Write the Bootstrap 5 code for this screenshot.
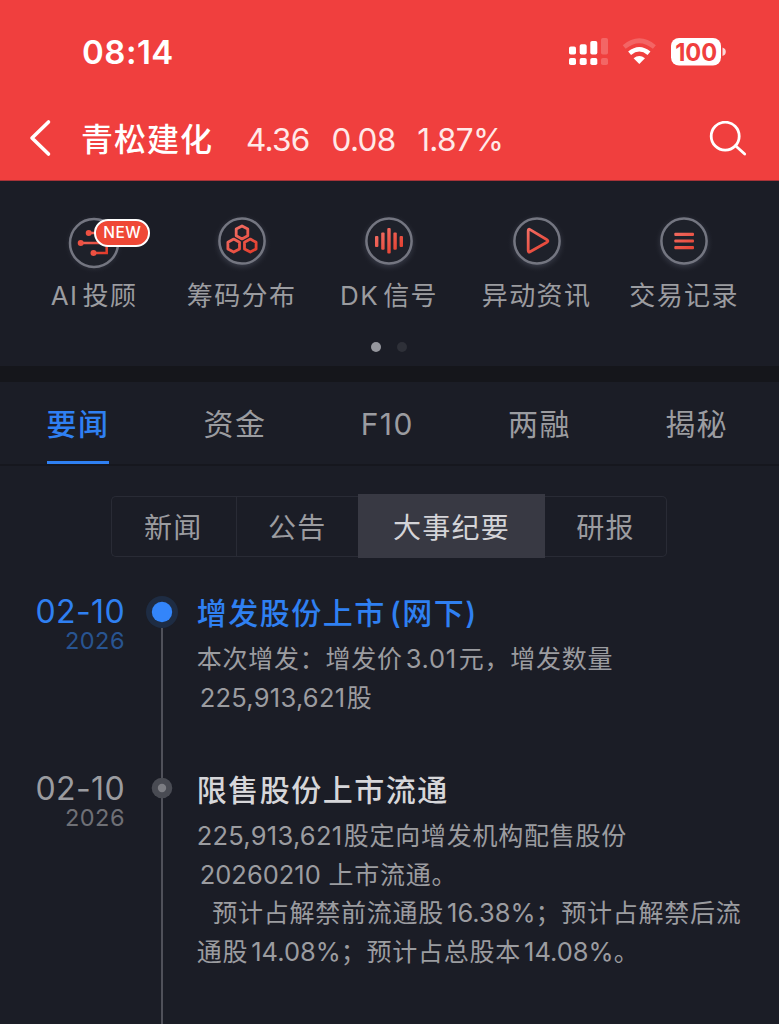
<!DOCTYPE html>
<html lang="zh-CN">
<head>
<meta charset="utf-8">
<meta name="viewport" content="width=device-width, initial-scale=1">
<title>青松建化</title>
<link href="https://cdn.jsdelivr.net/npm/bootstrap@5.3.0/dist/css/bootstrap.min.css" rel="stylesheet">
<style>
  body { background:#1b1d26; color:#9b9ca0; font-family:Inter,"Noto Sans CJK SC",sans-serif; height:1024px; overflow:hidden; line-height:1; }
  .top-area { background:#f03f3e; height:181px; color:#fff; border-bottom:1px solid #a83338; }
  .status-row { height:104px; padding:0 53px 0 82px; }
  .clock { font-size:33px; font-weight:600; letter-spacing:.5px; }
  .title-row { height:70px; padding:0 32px 0 28px; }
  .stock-name { font-size:32px; font-weight:500; letter-spacing:1px; width:165px; margin-left:29px; padding-top:1px; }
  .quote { font-size:31.5px; color:#ffe9e8; gap:21.8px; letter-spacing:-.7px; padding-top:1px; }
  .tools { height:185px; padding:30px 21px 0 20.3px; }
  .tool { width:147.5px; }
  .tool-label { font-size:26px; letter-spacing:1.4px; margin-top:10px; line-height:26px; white-space:nowrap; }
  .new-tag { left:74px; top:8px; width:56px; height:28px; border:2px solid #fff; background:#ef4836; color:#fff; font-size:15.5px; font-weight:500; border-radius:14px; letter-spacing:.5px; }
  .dots { gap:16px; margin-top:33px; }
  .dots i { width:10px; height:10px; border-radius:50%; background:#2e3038; }
  .dots i.on { background:#96979e; }
  .band { height:16px; background:#15161b; }
  .tabs { height:84px; border-bottom:2px solid #16171e; padding-left:46.5px; padding-right:51px; font-size:30px; letter-spacing:1.4px; }
  .tab-item { padding-top:27px; height:82px; line-height:30px; border-bottom:3px solid transparent; }
  .tab-item.on { color:#2f80f2; font-weight:500; border-color:#2f80f2; }
  .segments { margin:28px 112px 0 111px; height:64px; font-size:28px; letter-spacing:1.3px; }
  .seg { height:61px; border:1.5px solid #292b35; border-right-width:0; line-height:28px; padding-top:3px; }
  .seg.first { width:124.5px; border-radius:5px 0 0 5px; padding-right:1px; }
  .seg.mid { width:122.5px; }
  .seg.last { width:122px; border-right-width:1.5px; border-left:0; border-radius:0 5px 5px 0; }
  .seg.on { width:187px; height:64px; border:0; background:#383943; color:#d4d4d8; }
  .timeline { margin-top:34px; height:432px; }
  .entry { height:177px; }
  .entry.tall { height:255px; }
  .when { width:125px; text-align:right; padding-top:2px; }
  .day { font-size:32px; line-height:36px; letter-spacing:.4px; }
  .year { font-size:23.5px; line-height:22px; letter-spacing:.5px; color:#6f7076; }
  .rail { width:71.7px; position:relative; }
  .rail::before { content:""; width:2.4px; position:absolute; top:0; bottom:0; left:35.8px; background:#50515a; }
  .entry.on .rail::before { top:36px; }
  .rail svg { position:absolute; left:19px; top:2px; }
  .headline { font-size:30px; font-weight:500; letter-spacing:1.5px; line-height:40px; padding-top:1px; height:41px; color:#d6d6d9; white-space:nowrap; }
  .detail { font-size:25px; letter-spacing:.75px; line-height:38.7px; margin-top:7px; white-space:nowrap; }
  .detail b { font-weight:400; letter-spacing:0; margin-left:3px; font-size:25.5px; }
  .detail .long-num { letter-spacing:.25px; margin-right:1.5px; }
  .detail .price { letter-spacing:.7px; margin-right:2px; }
  .on .day, .on .headline { color:#2f80f2; }
  .on .year { color:#285491; }
</style>
</head>
<body>
<header class="top-area">
  <div class="status-row d-flex align-items-center justify-content-between">
    <span class="clock">08:14</span>
    <div class="d-flex align-items-center">
      <svg width="158" height="30" viewBox="568 37 158 30">
        <g fill="#fff">
          <rect x="569" y="46.5" width="7" height="8" rx="1.8"/><rect x="579.7" y="44.3" width="7" height="10.2" rx="1.8"/><rect x="590.3" y="41" width="7" height="13.5" rx="1.8"/>
          <rect x="569" y="58" width="7" height="7" rx="1.8"/><rect x="579.7" y="58" width="7" height="7" rx="1.8"/><rect x="590.3" y="58" width="7" height="7" rx="1.8"/>
          <g opacity=".2"><rect x="601" y="38" width="7" height="16.5" rx="1.8"/><rect x="601" y="58" width="7" height="7" rx="1.8"/></g>
          <path d="M639.3 64 633.6 58.3Q639.3 53.8 645 58.3Z"/>
        </g>
        <path d="M629.6 53.2Q639.3 45.3 649 53.2" fill="none" stroke="#fff" stroke-width="4.6"/>
        <path d="M624.2 47Q639.3 34.5 654.4 47" fill="none" stroke="#fff" stroke-width="4.6" opacity=".2"/>
        <rect x="671" y="38" width="50" height="27.5" rx="8" fill="#fff"/>
        <path d="M722.5 47.5Q725.8 48.5 725.8 51.7T722.5 56Z" fill="#fff" opacity=".8"/>
        <text x="696.2" y="60.6" text-anchor="middle" font-family="Inter" font-size="24" font-weight="700" textLength="42" lengthAdjust="spacingAndGlyphs" fill="#f03f3e">100</text>
      </svg>
    </div>
  </div>
  <div class="title-row d-flex align-items-center">
    <svg width="24" height="40" viewBox="0 0 24 40"><path d="M20.5 3 4 19 20.5 35" fill="none" stroke="#fff" stroke-width="3.6" stroke-linecap="round" stroke-linejoin="round"/></svg>
    <span class="stock-name">青松建化</span>
    <div class="quote d-flex"><span>4.36</span><span>0.08</span><span>1.87%</span></div>
    <svg class="ms-auto" width="38" height="36" viewBox="709 120 38 36"><g fill="none" stroke="#fff" stroke-width="2.8" stroke-linecap="round"><circle cx="725.2" cy="135.2" r="14"/><path d="M735.5 144.7 744.7 153"/></g></svg>
  </div>
</header>

<svg width="0" height="0" class="position-absolute">
  <defs>
    <linearGradient id="warm" gradientUnits="userSpaceOnUse" x1="18" y1="16" x2="42" y2="44"><stop stop-color="#f4736a"/><stop offset="1" stop-color="#e23a29"/></linearGradient>
    <radialGradient id="halo"><stop offset=".72" stop-color="#343743"/><stop offset="1" stop-color="#1b1d26" stop-opacity="0"/></radialGradient>
  </defs>
</svg>
<section class="tools">
  <div class="d-flex">
    <div class="tool d-flex flex-column align-items-center position-relative">
      <svg width="60" height="62" viewBox="0 0 60 62"><circle cx="30" cy="33" r="30" fill="url(#halo)"/><circle cx="30" cy="32" r="24" fill="#1e212a" stroke="#747681" stroke-width="2.5"/>
        <g fill="none" stroke="url(#warm)" stroke-width="2.5"><path d="M24 22.1H40M17 32H39M29 42.1H42.7V34"/></g><g fill="#ee5142"><circle cx="24.7" cy="22" r="3"/><circle cx="16.7" cy="32" r="3"/><circle cx="29.5" cy="42" r="3"/></g></svg>
      <span class="new-tag position-absolute d-flex align-items-center justify-content-center">NEW</span>
      <span class="tool-label">AI<span class="ms-1">投顾</span></span>
    </div>
    <div class="tool d-flex flex-column align-items-center">
      <svg width="60" height="62" viewBox="0 0 60 62"><circle cx="30" cy="32" r="30" fill="url(#halo)"/><circle cx="30" cy="30" r="22.6" fill="#1e212a" stroke="#747681" stroke-width="2.5"/>
        <g fill="none" stroke="url(#warm)" stroke-width="2.8" stroke-linejoin="round"><path d="M30 14.9 35.8 18.1V24.7L30 27.9 24.2 24.7V18.1ZM21.7 28.1 27.5 31.3V37.9L21.7 41.1 15.9 37.9V31.3ZM38.3 28.1 44.1 31.3V37.9L38.3 41.1 32.5 37.9V31.3Z"/></g></svg>
      <span class="tool-label">筹码分布</span>
    </div>
    <div class="tool d-flex flex-column align-items-center">
      <svg width="60" height="62" viewBox="0 0 60 62"><circle cx="30" cy="32" r="30" fill="url(#halo)"/><circle cx="30" cy="30" r="22.6" fill="#1e212a" stroke="#747681" stroke-width="2.5"/>
        <g fill="url(#warm)"><rect x="16" y="24.9" width="3.4" height="11" rx="1"/><rect x="22.2" y="21.5" width="3.4" height="17.2" rx="1"/><rect x="28.3" y="17" width="3.4" height="25.4" rx="1"/><rect x="34.4" y="21.5" width="3.4" height="17.2" rx="1"/><rect x="40.6" y="24.9" width="3.4" height="11" rx="1"/></g></svg>
      <span class="tool-label">DK<span class="ms-1">信号</span></span>
    </div>
    <div class="tool d-flex flex-column align-items-center">
      <svg width="60" height="62" viewBox="0 0 60 62"><circle cx="30" cy="32" r="30" fill="url(#halo)"/><circle cx="30" cy="30" r="22.6" fill="#1e212a" stroke="#747681" stroke-width="2.5"/>
        <path d="M21.2 20V39.6Q21.2 41.8 23.1 40.7L40 31.2Q41.8 30 40 28.8L23.1 18.6Q21.2 17.5 21.2 20Z" fill="none" stroke="url(#warm)" stroke-width="2.8" stroke-linejoin="round"/></svg>
      <span class="tool-label">异动资讯</span>
    </div>
    <div class="tool d-flex flex-column align-items-center">
      <svg width="60" height="62" viewBox="0 0 60 62"><circle cx="30" cy="32" r="30" fill="url(#halo)"/><circle cx="30" cy="30" r="22.6" fill="#1e212a" stroke="#747681" stroke-width="2.5"/>
        <g fill="url(#warm)"><rect x="20.3" y="21.8" width="19.7" height="3.2" rx="1"/><rect x="20.3" y="28.4" width="19.7" height="3.2" rx="1"/><rect x="20.3" y="35" width="19.7" height="3.2" rx="1"/></g></svg>
      <span class="tool-label">交易记录</span>
    </div>
  </div>
  <div class="dots d-flex justify-content-center"><i class="on"></i><i></i></div>
</section>
<div class="band"></div>
<nav class="tabs d-flex justify-content-between">
  <span class="tab-item on">要闻</span><span class="tab-item">资金</span><span class="tab-item">F10</span><span class="tab-item">两融</span><span class="tab-item">揭秘</span>
</nav>
<div class="segments d-flex align-items-center">
  <span class="seg first d-flex align-items-center justify-content-center">新闻</span>
  <span class="seg mid d-flex align-items-center justify-content-center">公告</span>
  <span class="seg on d-flex align-items-center justify-content-center">大事纪要</span>
  <span class="seg last d-flex align-items-center justify-content-center">研报</span>
</div>
<main class="timeline">
  <article class="entry on d-flex">
    <div class="when"><div class="day">02-10</div><div class="year">2026</div></div>
    <div class="rail"><svg width="36" height="36" viewBox="0 0 36 36"><circle cx="18" cy="18" r="16" fill="#1e2c43"/><circle cx="18" cy="18" r="10.2" fill="#3385fa"/></svg></div>
    <div>
      <div class="headline">增发股份上市<span class="ms-1">(网下)</span></div>
      <div class="detail">本次增发：增发价<b class="price">3.01</b>元，增发数量<br><b class="long-num">225,913,621</b>股</div>
    </div>
  </article>
  <article class="entry tall d-flex">
    <div class="when"><div class="day">02-10</div><div class="year">2026</div></div>
    <div class="rail"><svg width="36" height="36" viewBox="0 0 36 36"><circle cx="18" cy="17" r="10.3" fill="#494b53"/><circle cx="18" cy="17" r="4.2" fill="#7c7d83"/></svg></div>
    <div>
      <div class="headline">限售股份上市流通</div>
      <div class="detail"><b class="ms-0 long-num">225,913,621</b>股定向增发机构配售股份<br><b>20260210</b> 上市流通。<br>&nbsp;&nbsp;预计占解禁前流通股<b>16.38%</b>；预计占解禁后流<br>通股<b>14.08%</b>；预计占总股本<b>14.08%</b>。</div>
    </div>
  </article>
</main>
<script src="https://cdn.jsdelivr.net/npm/bootstrap@5.3.0/dist/js/bootstrap.bundle.min.js"></script>
</body>
</html>
